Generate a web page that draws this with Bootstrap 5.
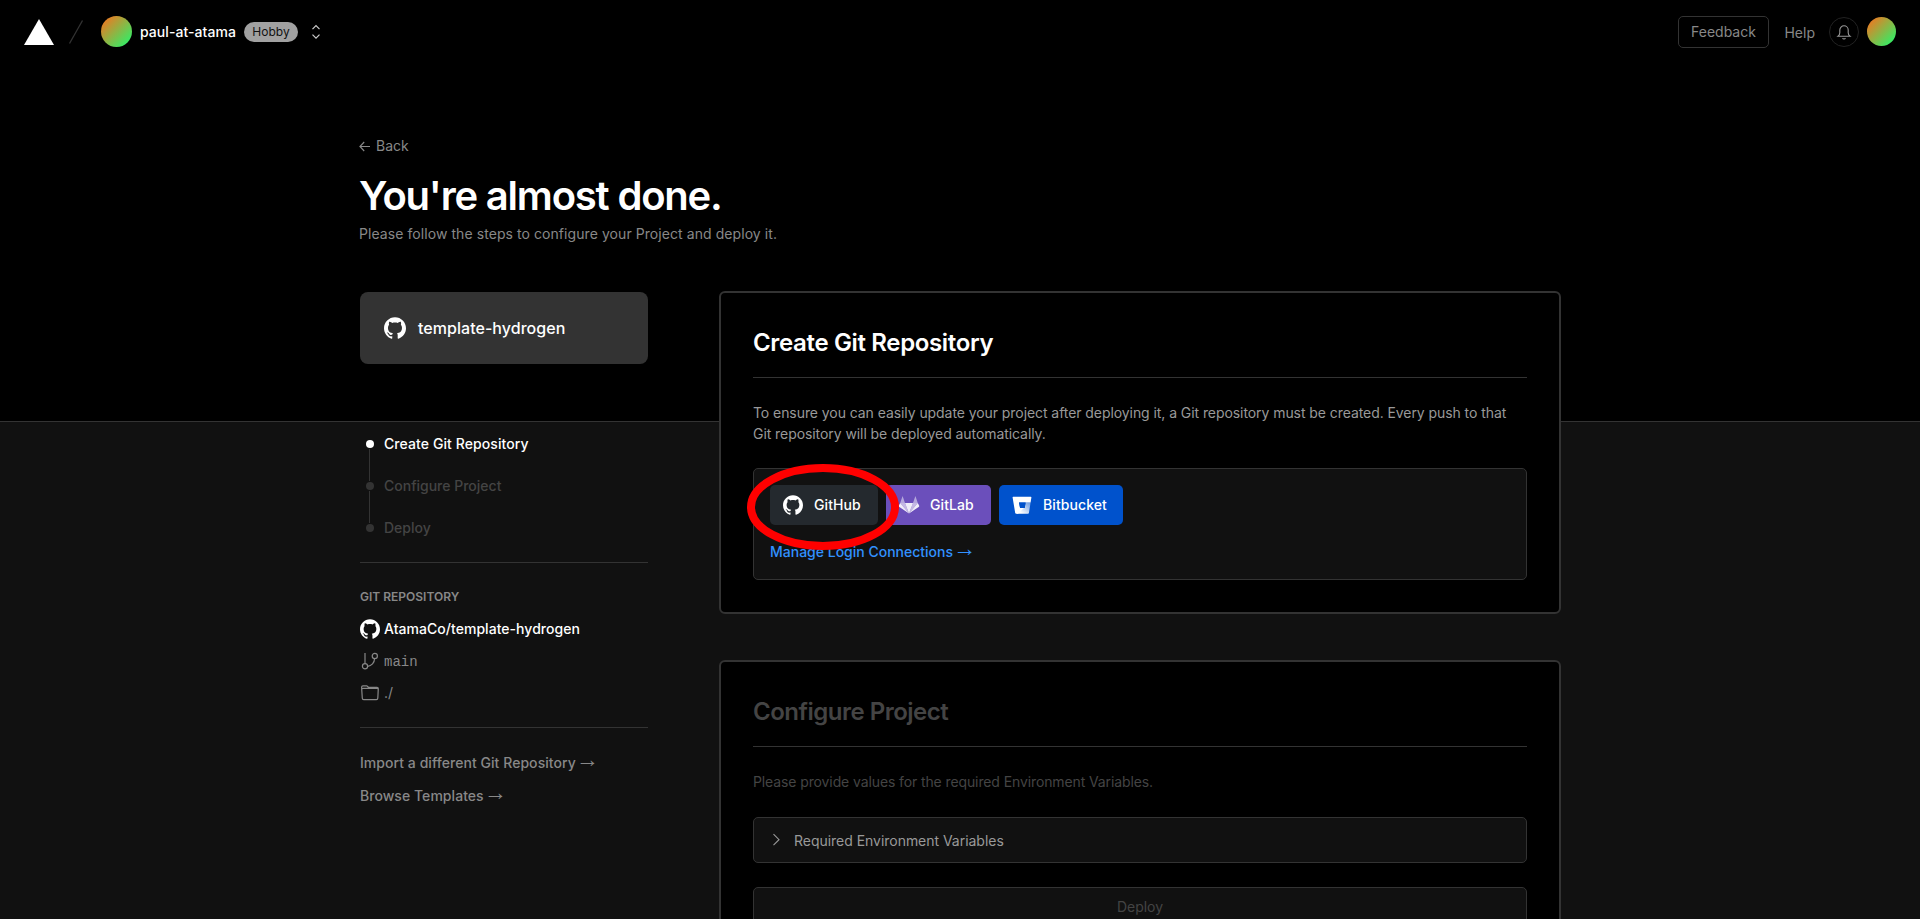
<!DOCTYPE html>
<html lang="en">
<head>
<meta charset="utf-8">
<meta name="viewport" content="width=device-width, initial-scale=1">
<title>New Project</title>
<link href="https://cdn.jsdelivr.net/npm/bootstrap@5.3.0/dist/css/bootstrap.min.css" rel="stylesheet">
<style>
  body { font: 400 14px/20px Inter, sans-serif; background: #111; color: #fff; height: 919px; overflow: hidden; }
  a { color: inherit; text-decoration: none; }
  svg { display: block; flex: none; }
  .shell { height: 919px; overflow: hidden; }
  .hero { height: 422px; background: #000; border-bottom: 1px solid #333; }
  .topbar { height: 64px; padding: 0 24px; }
  .avatar { width: 31px; height: 31px; margin: -.5px 0 0 16.5px; border-radius: 50%; background: linear-gradient(135deg, #f27620 8%, #2af369 92%); }
  .avatar-sm { width: 29px; height: 29px; margin-left: 8px; }
  .account { margin-left: 8.500px; font-weight: 500; letter-spacing: .06px; }
  .plan { height: 20px; width: 54px; text-align: center; margin-left: 8px; border-radius: 10px; background: #a1a1a1; color: #111; font-size: 12px; }
  .slash { margin-left: 14px; }
  .switcher { margin: -1px auto 0 13px; }
  .btn-feedback { --bs-btn-color: #888; --bs-btn-border-color: #333; --bs-btn-font-size: 14px; --bs-btn-line-height: 20px; --bs-btn-padding-y: 5px; --bs-btn-padding-x: 11px; --bs-btn-border-radius: 5px; width: 91px; }
  .help { margin: 2px 14px 0 15.5px; }
  .bell { width: 30px; height: 30px; margin-top: -1px; border: 1px solid #222; }
  .page { width: 1200px; margin: 0 auto; }
  .intro { padding-top: 72px; }
  .muted { color: #888; }
  .soft { color: #999; }
  .dim { color: #444; }
  .back { gap: 5px; margin-left: -1px; }
  .headline { font-size: 40px; line-height: 48px; font-weight: 600; letter-spacing: -1.2px; margin: 16px 0 0 -1px; }
  .subline { margin: 0 0 0 -1px; padding-top: 4px; letter-spacing: .07px; }
  .columns { margin-top: -131px; gap: 71px; }
  .sidebar { width: 288px; padding-top: 1px; flex: none; }
  .template { height: 72px; background: #333; border-radius: 8px; padding: 0 24px; gap: 12px; font-size: 16px; font-weight: 500; letter-spacing: .04px; }
  .steps { margin: 69px 0 16px; padding: 0; list-style: none; font-weight: 500; }
  .steps li { height: 42px; display: flex; }
  .steps li:last-child { height: 29px; }
  .steps li > span:last-child { padding-top: 1px; }
  .steps .current { letter-spacing: .09px; }
  .track { width: 24px; padding: 7px 0 0 6px; }
  .track i { display: block; width: 8px; height: 8px; border-radius: 50%; background: #333; }
  .track .now { background: #fff; }
  .track b { display: block; width: 1px; height: 32px; margin: 1px 0 0 3px; background: #333; }
  .rule { height: 1px; background: #333; }
  .caption { font-size: 12px; font-weight: 600; line-height: 20px; margin: 24px 0 6px; letter-spacing: 0; }
  .meta { height: 32px; gap: 4px; }
  .repo { font-weight: 500; letter-spacing: .04px; }
  .branch { font-family: "Liberation Mono", monospace; padding-top: 2px; }
  .links { margin-top: 25px; font-weight: 500; letter-spacing: .05px; }
  .links a + a { margin-top: 13px; }
  .arrow { font: 400 23px/0 "Liberation Sans", sans-serif; letter-spacing: 0; word-spacing: -6.4px; vertical-align: 1px; }
  .panels { width: 842px; gap: 46px; flex: none; }
  .panel { background: #000; border: 2px solid #333; border-radius: 6px; padding: 32px; }
  .panel h2 { font-size: 24px; line-height: 36px; font-weight: 600; letter-spacing: -.35px; margin: 0 0 16px; }
  .panel.dim h2 { letter-spacing: -.5px; }
  .panel p { line-height: 21px; margin: 0; padding: 24px 0; letter-spacing: -.07px; }
  .panel.dim p { padding-bottom: 25px; letter-spacing: -.11px; }
  .well-box { border: 1px solid #333; border-radius: 5px; background: #111; }
  .providers { height: 112px; padding: 16px; }
  .envs { height: 46px; padding-left: 18px; gap: 13px; }
  .envs span { padding-top: 2px; letter-spacing: -.03px; }
  .deploy { height: 42px; margin-top: 24px; padding-top: 9px; }
  .manage { color: #3291ff; font-weight: 500; margin-top: 17px; }
  .btn-git { --bs-btn-color: #fff; --bs-btn-font-size: 14px; --bs-btn-line-height: 20px; --bs-btn-font-weight: 500; --bs-btn-padding-y: 0; --bs-btn-padding-x: 0; --bs-btn-border-width: 0; --bs-btn-border-radius: 5px; height: 40px; display: flex; align-items: center; padding-left: 12px; gap: 10px; letter-spacing: .08px; }
  .github { background: #24292e; width: 108px; }
  .gitlab { background: #6b4fbb; width: 105px; }
  .bitbucket { background: #0052cc; width: 124px; }
  .ring { position: absolute; left: -7px; top: -5px; pointer-events: none; }
</style>
</head>
<body>
<svg width="0" height="0" class="position-absolute"><symbol id="octo" viewBox="0 0 24 24"><path fill="currentColor" d="M12 .297c-6.63 0-12 5.373-12 12 0 5.303 3.438 9.8 8.205 11.385.6.113.82-.258.82-.577 0-.285-.01-1.04-.015-2.04-3.338.724-4.042-1.61-4.042-1.61C4.422 18.07 3.633 17.7 3.633 17.7c-1.087-.744.084-.729.084-.729 1.205.084 1.838 1.236 1.838 1.236 1.07 1.835 2.809 1.305 3.495.998.108-.776.417-1.305.76-1.605-2.665-.3-5.466-1.332-5.466-5.93 0-1.31.465-2.38 1.235-3.22-.135-.303-.54-1.523.105-3.176 0 0 1.005-.322 3.3 1.23.96-.267 1.98-.399 3-.405 1.02.006 2.04.138 3 .405 2.28-1.552 3.285-1.23 3.285-1.23.645 1.653.24 2.873.12 3.176.765.84 1.23 1.91 1.23 3.22 0 4.61-2.805 5.625-5.475 5.92.42.36.81 1.096.81 2.22 0 1.606-.015 2.896-.015 3.286 0 .315.21.69.825.57C20.565 22.092 24 17.592 24 12.297c0-6.627-5.373-12-12-12"/></symbol></svg>

<div class="shell">
<section class="hero">
  <header class="topbar d-flex align-items-center">
    <svg width="30" height="26" viewBox="0 0 30 26"><path fill="#fff" d="M15 0l15 26H0z"/></svg>
    <svg class="slash" width="16" height="26" viewBox="0 0 16 26"><path d="M1.500 24.500L14.500 1.500" stroke="#333" stroke-width="1.300"/></svg>
    <span class="avatar"></span>
    <span class="account">paul-at-atama</span>
    <span class="plan">Hobby</span>
    <svg class="switcher" width="10" height="16" viewBox="0 0 10 16" fill="none" stroke="#ccc" stroke-width="1.200"><path d="M1.500 5.200L5 1.700l3.500 3.500M1.500 10.600L5 14.100l3.500-3.500"/></svg>
    <a href="#" class="btn btn-feedback">Feedback</a>
    <a href="#" class="muted help">Help</a>
    <span class="bell rounded-circle d-flex align-items-center justify-content-center">
      <svg width="16" height="16" viewBox="0 0 16 16" fill="none" stroke="#999" stroke-width="1.100"><path d="M2 12.200h12c-1.300-1-1.800-2-1.800-3.500V6A4.200 4.200 0 0 0 8 1.800 4.200 4.200 0 0 0 3.800 6v2.700c0 1.500-.5 2.500-1.800 3.500z"/><path d="M6.500 14.300c.6 1 2.400 1 3 0"/></svg>
    </span>
    <span class="avatar avatar-sm"></span>
  </header>
  <div class="page intro">
    <a href="#" class="muted back d-flex align-items-center">
      <svg width="12" height="12" viewBox="0 0 12 12" fill="none" stroke="currentColor" stroke-width="1.100"><path d="M11 6.500H1M5.200 2L.9 6.500l4.300 4.500"/></svg>Back</a>
    <h1 class="headline">You're almost done.</h1>
    <p class="muted subline">Please follow the steps to configure your Project and deploy it.</p>
  </div>
</section>

<main class="page columns d-flex align-items-start">
  <aside class="sidebar">
    <div class="template d-flex align-items-center">
      <svg width="22" height="22"><use href="#octo"/></svg>template-hydrogen
    </div>
    <ul class="steps">
      <li class="current"><span class="track"><i class="now"></i><b></b></span><span>Create Git Repository</span></li>
      <li class="dim"><span class="track"><i></i><b></b></span><span>Configure Project</span></li>
      <li class="dim"><span class="track"><i></i></span><span>Deploy</span></li>
    </ul>
    <div class="rule"></div>
    <div class="caption muted">GIT REPOSITORY</div>
    <a href="#" class="meta repo d-flex align-items-center"><svg width="20" height="20"><use href="#octo"/></svg>AtamaCo/template-hydrogen</a>
    <div class="meta d-flex align-items-center muted">
      <svg width="20" height="20" viewBox="0 0 20 20" fill="none" stroke="currentColor" stroke-width="1.200"><path d="M5 2v10.800M14.500 7.700c0 4-3 7.500-6.800 7.600"/><circle cx="5" cy="15.200" r="2.600"/><circle cx="14.800" cy="5" r="2.600"/></svg><span class="branch">main</span></div>
    <div class="meta d-flex align-items-center muted">
      <svg width="20" height="20" viewBox="0 0 20 20" fill="none" stroke="currentColor" stroke-width="1.200"><path d="M1.600 4.200q0-1.400 1.400-1.400h3.800l1.700 1.500h8.500q1.300 0 1.300 1.300l-.5 9.700q-.1 1.300-1.400 1.300H3.700q-1.300 0-1.400-1.300zM1.800 6.100q.3-.8 1.300-.8h13.800q1 0 1.400.8"/></svg><span>./</span></div>
    <div class="rule" style="margin-top:18px"></div>
    <div class="muted links"><a href="#" class="d-block">Import a different Git Repository<span class="arrow"> →</span></a><a href="#" class="d-block">Browse Templates<span class="arrow"> →</span></a></div>
  </aside>

  <div class="panels d-flex flex-column">
    <section class="panel">
      <h2>Create Git Repository</h2>
      <div class="rule"></div>
      <p class="soft">To ensure you can easily update your project after deploying it, a Git repository must be created. Every push to that Git repository will be deployed automatically.</p>
      <div class="well-box providers position-relative">
        <div class="d-flex gap-2">
          <a href="#" class="btn btn-git github"><svg width="22" height="20"><use href="#octo"/></svg>GitHub</a>
          <a href="#" class="btn btn-git gitlab"><svg width="22" height="20" viewBox="0 0 22 20"><path fill="#fff" fill-opacity=".9" d="M11 18.500L7 8h8z"/><path fill="#fff" fill-opacity=".6" d="M11 18.500L7 8H2.200zM11 18.500L15 8h4.800z"/><path fill="#fff" fill-opacity=".9" d="M2.200 8L.8 10.800q-.2.500.2.900L11 18.500zM19.800 8l1.400 2.800q.2.500-.2.900L11 18.500z"/><path fill="#fff" fill-opacity=".5" d="M2.200 8L4.600 1 7 8zM19.800 8l-2.400-7L15 8z"/></svg>GitLab</a>
          <a href="#" class="btn btn-git bitbucket"><svg width="22" height="20" viewBox="-1 0 22 20"><defs><linearGradient id="fade" x1="1" y1="0" x2=".2" y2=".8"><stop offset="0" stop-color="#fff" stop-opacity=".4"/><stop offset="1" stop-color="#fff"/></linearGradient></defs><path fill="#fff" d="M1.200 1.700h17.600q.7 0 .6.700l-.8 5H7l1.100 5.700h3.800L6 18.700H4.200q-.8 0-1-.8L.6 2.400q-.1-.7.600-.7z"/><path fill="url(#fade)" d="M18.600 7.400l-1.700 10.500q-.1.800-.9.800H4.500l3.600-5.600h4.600l.9-5.700z"/><path fill="#0052cc" d="M7 7.400h6.600l-.9 5.700H8.100z"/></svg>Bitbucket</a>
        </div>
        <a href="#" class="d-block manage">Manage Login Connections<span class="arrow"> →</span></a>
        <svg class="ring" width="152" height="86" viewBox="0 0 152 86"><ellipse cx="76" cy="43" rx="72" ry="39" fill="none" stroke="#f00" stroke-width="8"/></svg>
      </div>
    </section>
    <section class="panel dim">
      <h2>Configure Project</h2>
      <div class="rule"></div>
      <p>Please provide values for the required Environment Variables.</p>
      <div class="well-box envs soft d-flex align-items-center"><svg width="9" height="14" viewBox="0 0 9 14" fill="none" stroke="currentColor" stroke-width="1.100"><path d="M1.500 1.200L7 6.700l-5.500 5.500"/></svg><span>Required Environment Variables</span></div>
      <div class="well-box deploy text-center">Deploy</div>
    </section>
  </div>
</main>
</div>
<script src="https://cdn.jsdelivr.net/npm/bootstrap@5.3.0/dist/js/bootstrap.bundle.min.js"></script>
</body>
</html>
